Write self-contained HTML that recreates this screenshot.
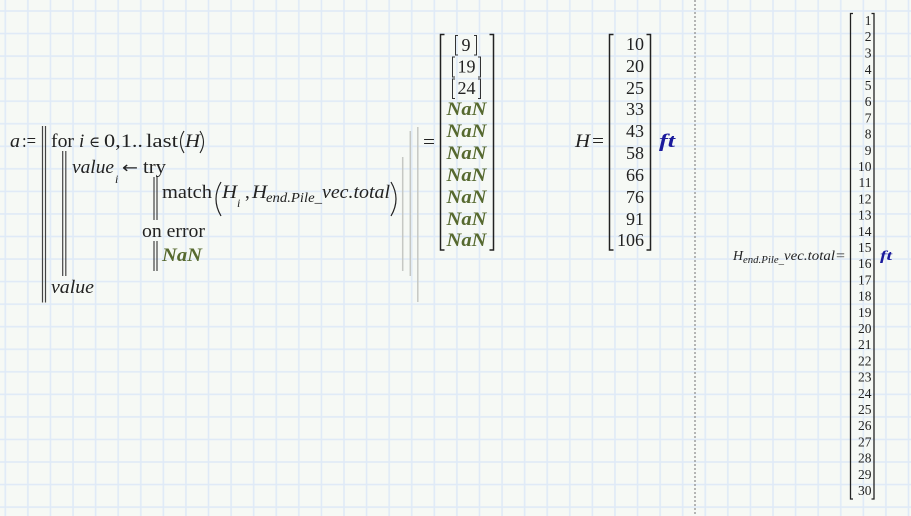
<!DOCTYPE html>
<html><head><meta charset="utf-8"><style>
html,body{margin:0;padding:0;background:#f6f9f5}
svg{display:block}
text{font-family:"Liberation Serif","DejaVu Serif",serif;fill:#222;font-size:19px}
.i{font-style:italic}
.n{font-style:italic;font-weight:bold;fill:#56692f}
.u{font-style:italic;font-weight:bold;fill:#1a1a9c}
.m{text-anchor:end;font-size:18px}
.t{text-anchor:end;font-size:13.5px}
.c{text-anchor:middle;font-size:18px}
</style></head><body>
<svg width="911" height="516" viewBox="0 0 911 516" xmlns="http://www.w3.org/2000/svg">
<defs>
<pattern id="g" x="5.3" y="11" width="22.58" height="22.55" patternUnits="userSpaceOnUse">
<rect x="-0.8" y="0" width="1.6" height="22.55" fill="#dfeaf7"/>
<rect x="21.78" y="0" width="1.6" height="22.55" fill="#dfeaf7"/>
<rect x="0" y="-0.8" width="22.58" height="1.6" fill="#dfeaf7"/>
<rect x="0" y="21.75" width="22.58" height="1.6" fill="#dfeaf7"/>
</pattern>
</defs>
<rect width="911" height="516" fill="#f6f9f5"/>
<rect width="911" height="516" fill="url(#g)"/>
<line x1="695" y1="0" x2="695" y2="516" stroke="#888" stroke-width="1.2" stroke-dasharray="2 2"/>

<!-- program -->
<text class="i" x="10" y="147" textLength="10" lengthAdjust="spacingAndGlyphs">a</text>
<text x="22" y="147" textLength="14" lengthAdjust="spacingAndGlyphs">:=</text>
<g stroke="#444" stroke-width="1.2" fill="none">
<path d="M42.5 126V302.5M45.5 126V302.5"/>
<path d="M62.7 151V276M65.8 151V276"/>
<path d="M154 177V220M157 177V220"/>
<path d="M154 241V271M157 241V271"/>
</g>
<g stroke="#c6c8c4" stroke-width="1.5" fill="none">
<path d="M402.7 157V271M410.3 131V276M417.8 127V302"/>
</g>
<text x="51" y="147" textLength="23" lengthAdjust="spacingAndGlyphs">for</text>
<text class="i" x="79" y="147">i</text>
<text x="89" y="147" style="font-size:15px">∈</text>
<text x="104" y="147" textLength="39" lengthAdjust="spacingAndGlyphs">0,1..</text>
<text x="146" y="147" textLength="32" lengthAdjust="spacingAndGlyphs">last</text>
<path d="M184 131Q177 142 184 153" fill="none" stroke="#222" stroke-width="1.1"/>
<text class="i" x="185" y="147" textLength="15" lengthAdjust="spacingAndGlyphs">H</text>
<path d="M200 131Q207 142 200 153" fill="none" stroke="#222" stroke-width="1.1"/>

<text class="i" x="72" y="173" textLength="42" lengthAdjust="spacingAndGlyphs">value</text>
<text class="i" x="115" y="183" style="font-size:12px">i</text>
<text x="122" y="173" style="font-family:'DejaVu Sans',sans-serif;font-size:16px" textLength="16" lengthAdjust="spacingAndGlyphs">←</text>
<text x="143" y="173" textLength="23" lengthAdjust="spacingAndGlyphs">try</text>

<text x="162" y="198" textLength="50" lengthAdjust="spacingAndGlyphs">match</text>
<path d="M221 182Q211 199 221 216" fill="none" stroke="#222" stroke-width="1.2"/>
<text class="i" x="222" y="198" textLength="15" lengthAdjust="spacingAndGlyphs">H</text>
<text class="i" x="237" y="207" style="font-size:12px">i</text>
<text x="245" y="198">,</text>
<text class="i" x="252" y="198" textLength="15" lengthAdjust="spacingAndGlyphs">H</text>
<text class="i" x="266" y="202" style="font-size:13.5px" textLength="56" lengthAdjust="spacingAndGlyphs">end.Pile_</text>
<text class="i" x="322" y="198" textLength="68" lengthAdjust="spacingAndGlyphs">vec.total</text>
<path d="M391 182Q401 199 391 216" fill="none" stroke="#222" stroke-width="1.2"/>

<text x="142" y="237" textLength="63" lengthAdjust="spacingAndGlyphs">on error</text>
<text class="n" x="162" y="261" textLength="40" lengthAdjust="spacingAndGlyphs">NaN</text>
<text class="i" x="51" y="293" textLength="43" lengthAdjust="spacingAndGlyphs">value</text>
<text x="423" y="148" textLength="12" lengthAdjust="spacingAndGlyphs">=</text>

<!-- result matrix -->
<g fill="none" stroke="#222" stroke-width="1.5">
<path d="M444.5 34.5H440.5V250H444.5M489.5 34.5H493.5V250H489.5"/>
</g>
<g fill="none" stroke="#333" stroke-width="1">
<path d="M458 35.5H455.5V55H458M474 35.5H476.5V55H474"/>
<path d="M455 57H452.5V77H455M478 57H480.5V77H478"/>
<path d="M455 79H452.5V98.5H455M478 79H480.5V98.5H478"/>
</g>
<text class="c" x="466" y="51">9</text>
<text class="c" x="466.5" y="72.5">19</text>
<text class="c" x="466.5" y="94">24</text>
<text class="n c" x="446.5" y="115" style="text-anchor:start;font-size:19px" textLength="40" lengthAdjust="spacingAndGlyphs">NaN</text>
<text class="n c" x="446.5" y="137" style="text-anchor:start;font-size:19px" textLength="40" lengthAdjust="spacingAndGlyphs">NaN</text>
<text class="n c" x="446.5" y="159" style="text-anchor:start;font-size:19px" textLength="40" lengthAdjust="spacingAndGlyphs">NaN</text>
<text class="n c" x="446.5" y="181" style="text-anchor:start;font-size:19px" textLength="40" lengthAdjust="spacingAndGlyphs">NaN</text>
<text class="n c" x="446.5" y="203" style="text-anchor:start;font-size:19px" textLength="40" lengthAdjust="spacingAndGlyphs">NaN</text>
<text class="n c" x="446.5" y="225" style="text-anchor:start;font-size:19px" textLength="40" lengthAdjust="spacingAndGlyphs">NaN</text>
<text class="n c" x="446.5" y="246" style="text-anchor:start;font-size:19px" textLength="40" lengthAdjust="spacingAndGlyphs">NaN</text>

<!-- H -->
<text class="i" x="575" y="147" textLength="15" lengthAdjust="spacingAndGlyphs">H</text>
<text x="592" y="147" textLength="12" lengthAdjust="spacingAndGlyphs">=</text>
<path d="M613.5 34.5H609.5V250H613.5M646.5 34.5H650.5V250H646.5" fill="none" stroke="#222" stroke-width="1.5"/>
<text class="m" x="644" y="50">10</text>
<text class="m" x="644" y="72">20</text>
<text class="m" x="644" y="94">25</text>
<text class="m" x="644" y="115">33</text>
<text class="m" x="644" y="137">43</text>
<text class="m" x="644" y="159">58</text>
<text class="m" x="644" y="181">66</text>
<text class="m" x="644" y="203">76</text>
<text class="m" x="644" y="225">91</text>
<text class="m" x="644" y="246">106</text>
<text class="u" x="659" y="147" textLength="16" lengthAdjust="spacingAndGlyphs">ft</text>

<!-- H end pile -->
<text class="i" x="733" y="260" style="font-size:14px" textLength="10" lengthAdjust="spacingAndGlyphs">H</text>
<text class="i" x="743" y="263" style="font-size:10px" textLength="41" lengthAdjust="spacingAndGlyphs">end.Pile_</text>
<text class="i" x="784" y="260" style="font-size:14px" textLength="51" lengthAdjust="spacingAndGlyphs">vec.total</text>
<text x="836" y="260" style="font-size:14px" textLength="9" lengthAdjust="spacingAndGlyphs">=</text>
<path d="M853 13.5H850.5V499H853M871.5 13.5H874V499H871.5" fill="none" stroke="#222" stroke-width="1.3"/>
<text class="t" x="871.5" y="25">1</text>
<text class="t" x="871.5" y="41">2</text>
<text class="t" x="871.5" y="57.5">3</text>
<text class="t" x="871.5" y="74">4</text>
<text class="t" x="871.5" y="90">5</text>
<text class="t" x="871.5" y="106">6</text>
<text class="t" x="871.5" y="122.5">7</text>
<text class="t" x="871.5" y="138.5">8</text>
<text class="t" x="871.5" y="155">9</text>
<text class="t" x="871.5" y="171">10</text>
<text class="t" x="871.5" y="187">11</text>
<text class="t" x="871.5" y="203.5">12</text>
<text class="t" x="871.5" y="219.5">13</text>
<text class="t" x="871.5" y="236">14</text>
<text class="t" x="871.5" y="252">15</text>
<text class="t" x="871.5" y="268">16</text>
<text class="t" x="871.5" y="284.5">17</text>
<text class="t" x="871.5" y="300.5">18</text>
<text class="t" x="871.5" y="317">19</text>
<text class="t" x="871.5" y="333">20</text>
<text class="t" x="871.5" y="349">21</text>
<text class="t" x="871.5" y="365.5">22</text>
<text class="t" x="871.5" y="381.5">23</text>
<text class="t" x="871.5" y="398">24</text>
<text class="t" x="871.5" y="414">25</text>
<text class="t" x="871.5" y="430">26</text>
<text class="t" x="871.5" y="446.5">27</text>
<text class="t" x="871.5" y="462.5">28</text>
<text class="t" x="871.5" y="479">29</text>
<text class="t" x="871.5" y="495">30</text>
<text class="u" x="880" y="260" style="font-size:14px" textLength="12" lengthAdjust="spacingAndGlyphs">ft</text>
</svg>
</body></html>
